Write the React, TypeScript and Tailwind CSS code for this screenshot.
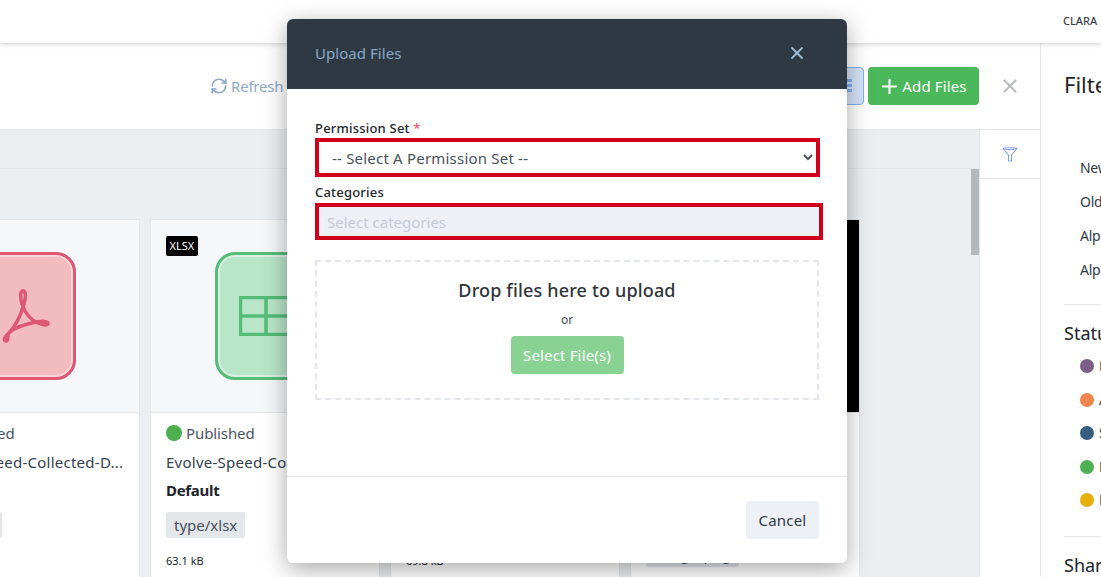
import React from "react";
import { RefreshCw, Plus, X } from "lucide-react";

const font = { fontFamily: "'Noto Sans', sans-serif" };

function FileIcon({ kind }: { kind: "pdf" | "xlsx" }) {
  if (kind === "pdf") {
    return (
      <div className="h-[128px] w-[128px] shrink-0 rounded-[20px] border-[3px] border-[#dc5873] bg-[#f2bcbe] shadow-[inset_0_0_0_2px_#f8d6d8]">
        <svg viewBox="-49 255 122 122" className="h-full w-full" fill="none" stroke="#dc5873" strokeWidth="3.500" strokeLinejoin="round">
          <path d="M8 334 C15 327 20 318 24 304 C26 296 26 291 23 291 C20 291 20 297 22 304 C25 313 31 320 38 323 C43 325 48 326 48 323.500 C48 321 42 321 36 322 C26 324 16 327 10 332 C5 336 3 340 5.500 341 C8 341.500 8 337 8 334 Z" />
        </svg>
      </div>
    );
  }
  return (
    <div className="flex h-[128px] w-[128px] shrink-0 items-center justify-center rounded-[20px] border-[3px] border-[#55bd77] bg-[#b9e6c9] shadow-[inset_0_0_0_2px_#d8f1e0]">
      <svg width="80" height="40" viewBox="0 0 80 40" fill="none" stroke="#55bd77" strokeWidth="3.500">
        <rect x="1.500" y="1.500" width="77" height="37" />
        <path d="M1.500 20H78.500M27 1.500V38.500M53 1.500V38.500" />
      </svg>
    </div>
  );
}

function Card({
  badge,
  icon,
  iconOffset = "ml-[64px]",
  name,
  tag,
  tagOffset = "mt-[11px]",
  size,
  black,
}: {
  badge?: string;
  icon?: "pdf" | "xlsx";
  iconOffset?: string;
  name: string;
  tag: string;
  tagOffset?: string;
  size: string;
  black?: boolean;
}) {
  return (
    <div className="h-[400px] w-[230px] shrink-0 border border-[#e3e6ea] bg-white">
      <div className={`relative h-[193px] border-b border-[#e3e6ea] ${black ? "bg-black" : "bg-[#f6f7f9]"}`}>
        {badge && (
          <span className="absolute left-[15px] top-[16px] rounded-[2px] bg-black px-[3.500px] text-[11px] leading-[20px] text-white">{badge}</span>
        )}
        {icon && (
          <div className={`pt-[32px] ${iconOffset}`}>
            <FileIcon kind={icon} />
          </div>
        )}
      </div>
      <div className="px-[15px] pt-[9px] text-[#33404e]">
        <div className="flex h-[22px] items-center gap-[4px] text-[15px] tracking-[-0.1px] text-[#4a5562]">
          <span className="h-[16px] w-[16px] shrink-0 rounded-full bg-[#4caf50]" />
          Published
        </div>
        <div className="mt-[7px] whitespace-nowrap text-[15px] leading-[22px] tracking-[0.25px]">{name}</div>
        <div className="mt-[6px] text-[15px] font-bold leading-[22px] tracking-[-0.3px] text-[#212529]">Default</div>
        <div className={`${tagOffset} w-fit rounded-[2px] bg-[#e4e7ea] px-[8px] text-[15px] leading-[26px] text-[#444f5e]`}>{tag}</div>
        <div className="mt-[15px] text-[11px] leading-[16px] text-[#212529]">{size}</div>
      </div>
    </div>
  );
}

const statuses = ["bg-[#7c5e88]", "bg-[#f0854f]", "bg-[#365e7e]", "bg-[#4caf50]", "bg-[#e8ae0c]"];
const statusInitials = ["D", "A", "S", "P", "R"];

export default function App() {
  return (
    <div style={font} className="relative flex h-[577px] w-[1101px] flex-col overflow-hidden bg-white">
      <header className="z-10 flex h-[43px] shrink-0 items-center justify-end bg-white pr-[1px] shadow-[0_1px_5px_rgba(0,0,0,0.2)]">
        <span className="w-[37px] overflow-hidden whitespace-nowrap text-[11px] font-medium text-[#3b3f44]">CLARA SMITH</span>
      </header>

      <div className="flex min-h-0 flex-1">
        <div className="flex w-[1041px] shrink-0 flex-col border-r border-[#e3e6ea]">
          <div className="flex h-[87px] shrink-0 items-center border-b border-[#e3e6ea] pl-[210px]">
            <div className="flex items-center gap-[3px] text-[15px] tracking-[-0.2px] text-[#8fa9c4]">
              <RefreshCw size={18} strokeWidth={2.200} />
              Refresh
            </div>
            <div className="flex-1" />
            <div className="flex h-[38px] w-[40px] items-center justify-center rounded-[4px] border border-[#7fb0f0] bg-[#d5e4f9]">
              <svg width="16" height="14" viewBox="0 0 16 14" fill="#7fb0f0">
                <rect width="16" height="3" />
                <rect y="5" width="16" height="3" />
                <rect y="10" width="16" height="3" />
              </svg>
            </div>
            <div className="ml-[4px] flex h-[38px] w-[111px] items-center justify-center gap-[1px] rounded-[4px] bg-[#4cb85c] pr-[2px] text-[15px] tracking-[0.14px] text-white">
              <Plus size={23} strokeWidth={2.200} />
              Add Files
            </div>
            <div className="flex w-[61px] justify-center text-[#b9bdc1]">
              <X size={22} strokeWidth={2.400} />
            </div>
          </div>

          <div className="flex min-h-0 flex-1">
            <div className="relative w-[980px] shrink-0 overflow-hidden border-r border-[#e3e6ea] bg-[#eceff2]">
              <div className="h-[39px] border-b border-[#e3e6ea]" />
              <div className="absolute right-0 top-[39px] h-[86px] w-[8px] bg-[#b3b8bb]" />
              <div className="ml-[-90px] mt-[50px] flex gap-[10px]">
                <Card icon="pdf" iconOffset="ml-[37px]" name="Evolve-Speed-Collected-D..." tag="type/pdf" size="63.1 kB" />
                <Card badge="XLSX" icon="xlsx" name="Evolve-Speed-Collected-D..." tag="type/xlsx" size="63.1 kB" />
                <Card name="Evolve-Speed-Collected-D..." tag="type/docx" size="69.8 kB" />
                <Card black name="Evolve-Speed-Collected-D..." tag="image/png" tagOffset="mt-[40px]" size="69.8 kB" />
              </div>
            </div>
            <div className="flex-1">
              <div className="flex h-[49px] items-center justify-center border-b border-[#e3e6ea]">
                <svg width="16" height="16" viewBox="0 0 16 16" fill="none" stroke="#7f9cf5" strokeWidth="1" strokeLinejoin="round">
                  <path d="M1 2.500C1 1.500 15 1.500 15 2.500L9.500 9V15H6.500V9Z" />
                  <path d="M1 2.500C3 4 13 4 15 2.500" />
                </svg>
              </div>
            </div>
          </div>
        </div>

        <aside className="min-w-0 flex-1 overflow-hidden whitespace-nowrap pl-[23px] text-[#2f3944]">
          <div className="pt-[25px] text-[22px] leading-[32px] text-[#212529]">Filters</div>
          <div className="ml-[16px] mt-[57px] flex flex-col gap-[12px] text-[14px] leading-[22px] tracking-[-0.3px]">
            <div>Newest</div>
            <div>Oldest</div>
            <div>Alpha A-Z</div>
            <div>Alpha Z-A</div>
          </div>
          <div className="mt-[23px] border-t border-[#e3e6ea]" />
          <div className="mt-[15px] text-[18px] leading-[26px] text-[#212529]">Status</div>
          <div className="ml-[16px] mt-[10px] flex flex-col gap-[13.500px] text-[14px] leading-[20px]">
            {statuses.map((c, i) => (
              <div key={c} className="flex items-center gap-[5px]">
                <span className={`h-[14px] w-[14px] shrink-0 rounded-full ${c}`} />
                {statusInitials[i]}
              </div>
            ))}
          </div>
          <div className="mt-[26px] border-t border-[#e3e6ea]" />
          <div className="mt-[15px] text-[18px] leading-[26px] text-[#212529]">Share</div>
        </aside>
      </div>

      <div className="absolute left-[287px] top-[19px] z-20 flex h-[544px] w-[560px] flex-col overflow-hidden rounded-[6px] bg-white shadow-[0_6px_24px_rgba(0,0,0,0.35)]">
        <div className="flex h-[70px] shrink-0 items-center justify-between bg-[#2f3944] pb-[2px] pl-[28px] pr-[40px]">
          <span className="text-[15px] tracking-[0.05px] text-[#88a9c7]">Upload Files</span>
          <X size={20} strokeWidth={2.200} className="text-[#9dbbd2]" />
        </div>
        <div className="flex-1 pl-[28px] pt-[30px]">
          <label className="block text-[13px] font-medium leading-[18px] tracking-[0.2px] text-[#212529]">
            Permission Set <span className="text-[#f0506e]">*</span>
          </label>
          <select className="mt-[1px] block h-[39px] w-[505px] border-4 border-[#d0021b] bg-white pl-[9px] text-[15px] tracking-[0.2px] text-[#495057] outline-none">
            <option>-- Select A Permission Set --</option>
          </select>
          <label className="mt-[6px] block text-[13px] font-medium leading-[18px] tracking-[0.2px] text-[#212529]">Categories</label>
          <input
            readOnly
            placeholder="Select categories"
            className="mt-[2px] block h-[37px] w-[508px] border-4 border-[#d0021b] bg-[#edf1f5] pl-[8px] text-[15px] outline-none placeholder:text-[#c5cad3]"
          />
          <div className="mt-[20px] flex h-[140px] w-[504px] flex-col items-center border-2 border-dashed border-[#e3e6ea] pt-[15px]">
            <div className="text-[18px] font-medium leading-[26px] tracking-[0.16px] text-[#2f3439]">Drop files here to upload</div>
            <div className="mt-[8px] text-[12px] leading-[18px] text-[#444a50]">or</div>
            <div className="mt-[7px] flex h-[38px] w-[113px] items-center justify-center rounded-[4px] bg-[#8ad294] text-[15px] tracking-[0.16px] text-white">Select File(s)</div>
          </div>
        </div>
        <div className="flex h-[87px] shrink-0 items-center justify-end border-t border-[#e3e6ea] pr-[28px]">
          <div className="flex h-[38px] w-[73px] items-center justify-center rounded-[4px] bg-[#edf1f5] text-[15px] tracking-[0.2px] text-[#2f3944]">Cancel</div>
        </div>
      </div>
    </div>
  );
}
